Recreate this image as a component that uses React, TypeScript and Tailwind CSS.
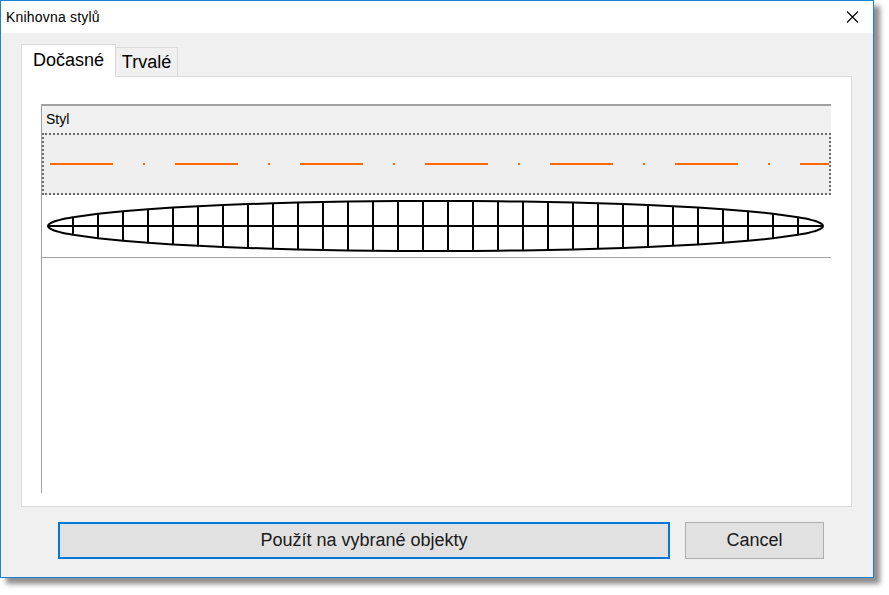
import React from 'react';

// geometry of the stepped "ellipse" style preview (row coords)
const CX = 393.5;
const CY = 31;
const RX = 387.5;
const RY = 25;
const GRID = Array.from({ length: 30 }, (_, k) => 31 + k * 25);

function half(x: number) {
  const t = (x - CX) / RX;
  return RY * Math.sqrt(Math.max(0, 1 - t * t));
}

function tipXs(from: number, to: number) {
  const xs: number[] = [];
  for (let i = 1; i < 12; i++) xs.push(from + ((to - from) * i * i) / 144);
  return xs;
}

function outline() {
  const left = CX - RX;
  const right = CX + RX;
  const xs = [left, ...tipXs(left, GRID[0]), ...GRID, ...tipXs(right, GRID[GRID.length - 1]).reverse(), right];
  const top = xs.map((x) => `${x.toFixed(1)},${(CY - half(x)).toFixed(1)}`);
  const bottom = [...xs].reverse().slice(1, -1).map((x) => `${x.toFixed(1)},${(CY + half(x)).toFixed(1)}`);
  return [...top, ...bottom].join(' ');
}

function DashedStyle() {
  return (
    <svg width="786" height="58" className="block">
      <line x1="6" y1="29" x2="786" y2="29" stroke="#ff6a00" strokeWidth="2.2" strokeDasharray="63 30 2 30" />
    </svg>
  );
}

function GridStyle() {
  return (
    <svg width="788" height="62" className="block">
      <polygon points={outline()} fill="white" stroke="black" strokeWidth="2" strokeLinejoin="round" />
      <line x1={CX - RX} y1={CY} x2={CX + RX} y2={CY} stroke="black" strokeWidth="2" />
      {GRID.map((x) => (
        <line key={x} x1={x} y1={CY - half(x)} x2={x} y2={CY + half(x)} stroke="black" strokeWidth="2" />
      ))}
    </svg>
  );
}

export default function App() {
  return (
    <div className="w-[889px] h-[595px] bg-white font-['Liberation_Sans',Arial,sans-serif] text-black">
      <div className="w-[874px] h-[578px] flex flex-col border border-[#1883d7] bg-[#f0f0f0] shadow-[6px_6px_5px_rgba(0,0,0,0.45)]">
        {/* title bar */}
        <div className="h-[32px] shrink-0 bg-white flex items-center justify-between pl-[5px] pr-[14px]">
          <span className="text-[14px] tracking-[0.2px]">Knihovna stylů</span>
          <svg width="13" height="12" viewBox="0 0 13 12">
            <path d="M1 0.5 L12 11.5 M12 0.5 L1 11.5" stroke="black" strokeWidth="1.1" />
          </svg>
        </div>

        {/* tabs */}
        <div className="flex items-end pl-[20px] pt-[11px] h-[43px]">
          <div className="relative z-10 -mb-px h-[33px] w-[95px] bg-white border border-b-0 border-[#d9d9d9] flex items-center justify-center text-[18px] pb-[1px]">
            Dočasné
          </div>
          <div className="h-[29px] w-[62px] bg-[#f0f0f0] border border-l-0 border-b-0 border-[#d9d9d9] flex items-center justify-center text-[18px] pt-[1px]">
            Trvalé
          </div>
        </div>

        {/* tab panel */}
        <div className="ml-[20px] w-[831px] h-[431px] bg-white border border-[#dadada] pl-[19px] pr-[20px] pt-[27px] pb-[13px]">
          <div className="h-full border-l border-[#a0a0a0] flex flex-col">
            <div className="h-[29px] bg-[#f0f0f0] border-t-2 border-[#a0a0a0] flex items-center pl-[4px] text-[14px]">
              Styl
            </div>
            <div className="h-[62px] bg-[#efefef] border-2 border-dotted border-[#6a6a6a] flex items-center">
              <DashedStyle />
            </div>
            <div className="h-[63px] bg-white border-b border-[#a0a0a0] flex items-center">
              <GridStyle />
            </div>
          </div>
        </div>

        {/* buttons */}
        <div className="flex pl-[57px] gap-[15px] mt-[15px]">
          <button className="w-[612px] h-[37px] bg-[#e1e1e1] border-2 border-[#0078d7] text-[18px] text-[#1a1a1a]">
            Použít na vybrané objekty
          </button>
          <button className="w-[139px] h-[37px] bg-[#e1e1e1] border border-[#adadad] text-[18px] text-[#1a1a1a]">
            Cancel
          </button>
        </div>
      </div>
    </div>
  );
}
